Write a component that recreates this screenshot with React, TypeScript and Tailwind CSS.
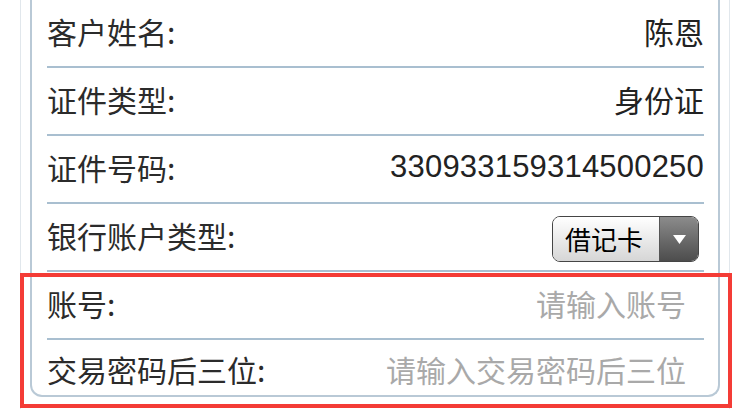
const cjk = "font-['Noto_Sans_CJK_SC','Noto_Sans',sans-serif]";

function Row({ label, children, last }: { label: string; children?: React.ReactNode; last?: boolean }) {
  return (
    <div
      className={`flex items-center justify-between ${
        last ? "h-[55px] pt-[3px]" : "h-[68px] border-b-2 border-[#a9bfd0] pb-[5px]"
      }`}
    >
      <div className="text-[30px] leading-none text-[#2b2b2b] whitespace-nowrap">{label}</div>
      {children}
    </div>
  );
}

function Select() {
  return (
    <div className="mr-[5px] mt-[9px] flex h-[46px] w-[147px] overflow-hidden rounded-[8px] border-[1.5px] border-[#454545]">
      <div className="flex flex-1 items-center justify-center bg-gradient-to-b from-white to-[#d6d6d6] pr-[4px] text-[26px] leading-none text-black">
        借记卡
      </div>
      <div className="flex w-[39px] items-center justify-center border-l border-[#555] bg-gradient-to-b from-[#8c8c8c] to-[#4d4d4d]">
        <svg width="13" height="9" viewBox="0 0 13 9">
          <path d="M0 0 L13 0 L6.5 9 Z" fill="#fff" />
        </svg>
      </div>
    </div>
  );
}

export default function App() {
  return (
    <div className={`relative h-[409px] w-[750px] overflow-hidden bg-white ${cjk}`}>
      <div className="mx-[20px] h-full border-x border-[#e1e7ec] px-[9px]">
        <div className="rounded-b-[12px] border-x-2 border-b-2 border-[#b9c9d6] pl-[15px] pr-[14px]">
          <Row label="客户姓名:">
            <div className="text-[30px] leading-none text-[#222]">陈恩</div>
          </Row>
          <Row label="证件类型:">
            <div className="text-[30px] leading-none text-[#222]">身份证</div>
          </Row>
          <Row label="证件号码:">
            <div className="font-['Liberation_Sans',Arial,sans-serif] text-[31px] leading-none tracking-[0.2px] text-[#222]">
              330933159314500250
            </div>
          </Row>
          <Row label="银行账户类型:">
            <Select />
          </Row>
          <Row label="账号:">
            <input
              type="text"
              placeholder="请输入账号"
              className="w-[360px] bg-transparent pr-[18px] text-right text-[30px] leading-none outline-none placeholder:text-[#a9a9a9]"
            />
          </Row>
          <Row label="交易密码后三位:" last>
            <input
              type="password"
              placeholder="请输入交易密码后三位"
              className="w-[360px] bg-transparent pr-[18px] text-right text-[30px] leading-none outline-none placeholder:text-[#a9a9a9]"
            />
          </Row>
        </div>
      </div>
      <div className="pointer-events-none absolute left-[20px] top-[273px] h-[135px] w-[712px] border-4 border-[#f43c36]" />
    </div>
  );
}
